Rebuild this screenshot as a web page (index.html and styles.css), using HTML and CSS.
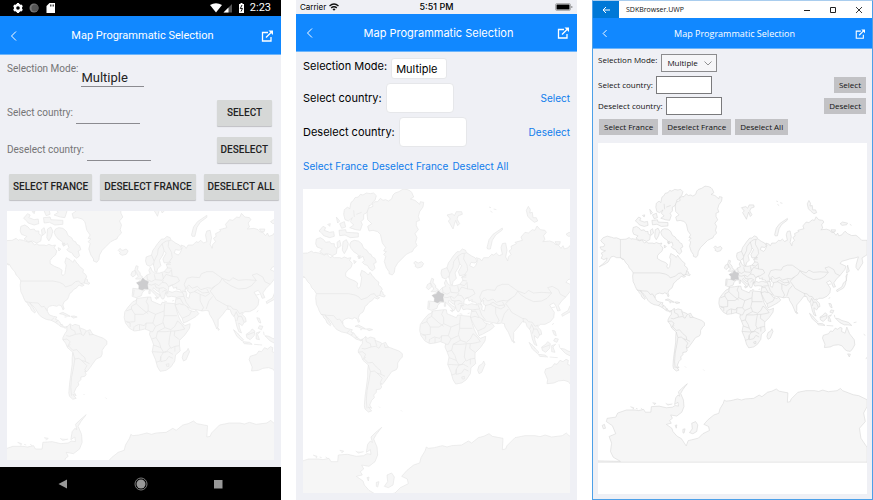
FILE: index.html
```html
<!DOCTYPE html>
<html lang="en">
<head>
<meta charset="utf-8">
<title>Map Programmatic Selection</title>
<link rel="stylesheet" href="styles.css">
</head>
<body>
<svg class="defs" aria-hidden="true">
  <defs>
    <g id="world">
      <g class="land">
        <!-- North America -->
        <path d="M18 219L4 213-6 214-14 211-30 207-45 213-53 223-47 231-39 237-42 245-56 246-51 256-36 260-51 268-47 277-52 287-42 292-30 286-33 295-47 309-59 318-38 308-27 301-16 282-6 280 4 285 18 285 26 292 30 291 38 304 46 312 50 322 58 330 64 340 62 352 64 372 70 384 72 390 78 402 84 405 86 412 92 418 96 428 106 436 108 432 98 416 90 405 98 412 108 424 118 440 126 448 140 455 155 458 165 463 176 470 182 476 192 479 198 482 204 476 196 478 186 472 180 462 176 458 168 455 172 448 162 446 150 442 144 432 143 422 150 416 160 413 172 416 178 412 186 415 190 426 194 424 190 412 194 402 204 395 208 386 210 378 216 374 222 366 232 360 238 352 248 356 254 352 244 348 262 344 258 332 262 328 258 320 250 314 252 306 240 296 236 290 232 286 225 276 220 284 212 276 200 270 196 284 200 292 198 306 196 318 190 324 186 318 188 308 180 302 165 296 152 288 152 278 160 268 168 262 172 250 164 240 168 232 158 234 148 230 140 234 134 232 118 232 112 228 105 232 95 220 88 224 72 218 60 216 56 218 50 212 38 218z"/>
        <path d="M258 332L264 336 264 342 271 346 268 350 254 346z"/>
        <path d="M168 184L178 180 190 182 200 190 206 204 216 210 222 220 228 222 232 230 240 234 244 246 236 250 240 264 232 272 222 264 218 256 208 252 202 246 208 240 204 228 194 234 188 222 176 214 168 204 164 194zM64 176L76 172 86 178 92 186 104 184 108 190 118 190 118 198 126 204 124 220 112 226 98 220 86 222 74 214 82 206 66 200 62 190zM126 186L134 180 138 196 128 204zM144 184L154 178 160 190 156 206 148 220 142 210zM72 152L84 138 92 142 88 150 104 156 116 154 118 168 104 172 86 166 80 158zM124 110L134 122 128 128zM98 132L106 130 104 138zM132 150L152 148 154 156 190 158 190 170 166 172 150 164 134 166zM134 130L148 124 152 140 140 144zM176 240L184 244 178 250zM188 228L196 226 192 236z"/>
        <path d="M164 86L168 66 174 62 180 52 190 50 196 42 204 44 214 38 226 40 236 38 244 46 240 60 234 64 228 74 222 76 222 86 214 98 206 102 206 116 198 124 202 132 196 150 182 148 164 142 176 134 166 124 172 112 160 122 150 118 146 102 148 88 158 80z"/>
        <path d="M216 98L220 84 234 78 232 70 240 64 248 64 256 54 264 60 272 58 280 62 290 56 294 44 300 38 312 34 324 26 338 28 346 32 350 36 356 50 346 56 360 60 374 72 376 64 386 66 384 80 374 94 370 108 374 120 364 124 364 136 370 148 360 160 366 172 362 186 366 196 356 206 352 214 346 216 334 222 320 236 308 248 300 262 298 276 292 284 282 280 282 274 274 262 268 244 272 228 266 222 274 214 266 212 272 202 262 188 258 170 256 162 248 154 234 150 222 152 218 138 230 130 218 118z"/>
        <path d="M356 248L362 242 364 246 370 248 380 244 386 250 380 260 368 263 360 258 362 254z"/>
        <path d="M180 438L190 434 202 440 212 446 200 445 190 440zM214 446L224 445 233 448 222 451zM195 448L201 448"/>
        <!-- South America -->
        <path d="M202 478L212 468 218 474 226 470 240 474 240 480 256 486 262 490 272 486 276 494 280 500 296 506 312 512 322 520 322 530 316 536 308 548 308 560 304 568 290 574 280 588 270 602 262 612 256 610 260 620 256 626 244 628 244 636 236 644 238 652 230 660 224 674 230 684 220 680 230 692 220 695 210 686 208 676 210 650 214 620 218 590 218 570 220 554 204 540 198 526 190 516 190 510 196 498 202 490zM252 679L255 682M318 690L321 693"/>
        <!-- Europe and Asia -->
        <path d="M400 362L418 364 418 352 412 346 422 338 434 330 442 322 452 318 448 308 453 298 458 310 466 316 480 316 494 312 504 300 500 290 514 284 506 284 494 286 490 274 500 256 494 250 490 262 480 278 484 294 474 304 472 314 466 312 464 298 460 288 452 296 442 292 438 280 440 268 456 262 460 248 466 240 474 228 486 214 494 214 502 206 512 210 514 216 528 226 540 232 546 242 540 248 528 246 524 256 536 262 542 256 548 240 544 232 556 236 560 242 566 232 580 232 590 222 596 224 604 218 612 226 622 222 618 202 622 190 632 188 636 210 632 230 638 242 640 230 648 222 642 212 650 206 648 198 664 190 660 186 682 180 678 170 690 156 700 158 712 148 720 150 726 137 736 148 750 150 754 156 746 166 750 178 743 184 764 182 776 186 780 192 790 194 798 204 804 196 808 206 820 202 824 196 831 189 840 198 855 205 870 204 879 210 891 222 911 222 911 274 892 286 895 304 878 331 870 320 871 310 879 282 866 286 849 289 834 294 819 298 813 306 834 316 830 328 825 334 812 350 800 362 790 376 796 390 788 392 782 376 776 368 764 374 770 384 778 396 776 412 766 424 750 432 736 432 728 440 738 450 740 462 734 464 728 474 718 466 720 480 726 496 718 492 712 476 706 450 696 438 692 426 682 424 670 440 656 456 656 476 652 484 640 456 630 440 628 430 620 428 608 430 590 426 574 424 562 416 570 428 584 432 590 428 598 438 590 446 580 452 562 462 552 466 548 452 540 440 532 424 526 412 530 388 516 386 504 388 498 376 506 376 498 374 496 386 492 394 488 394 484 388 480 374 470 368 462 360 460 366 472 376 482 382 476 392 466 380 458 372 452 366 436 366 428 376 426 384 410 390 398 386z"/>
        <path d="M410 294L416 296 414 306 422 316 422 322 430 328 422 334 408 334 416 326 412 318 406 306zM398 312L406 308 410 320 400 328 394 322zM448 370L452 366 452 378 448 378zM466 390L474 390 472 395zM494 400L502 402M518 400L524 398M800 402L819 391 825 376 836 368 834 352 839 343 832 382 825 395 812 402 802 408zM836 340L840 312 846 334z"/>
        <path d="M576 202L582 178 594 162 622 143 622 149 602 164 592 180 586 206 578 206zM456 104L472 100 478 106 484 94 500 94 502 102 490 106 486 116 494 130 488 136 482 120 478 132 474 146 466 132 460 122 466 116zM582 80L588 82M586 92L592 96M596 86L604 88M694 90L700 78 706 88 704 98 712 96 714 112 724 112 728 122 718 126 708 118 698 108zM780 184L796 184 794 192 784 192zM813 162L822 156 840 160 836 166 820 168zM848 164L854 168"/>
        <!-- Africa -->
        <path d="M400 402L410 398 412 392 430 390 446 388 454 388 456 400 470 406 484 412 488 404 504 406 526 408 532 430 538 448 546 464 556 474 572 468 570 482 556 502 540 518 540 534 542 550 528 562 526 580 514 598 500 608 482 611 474 598 468 576 458 552 462 530 456 514 450 500 452 490 436 484 420 488 404 490 390 482 378 466 374 450 376 432 386 418zM552 556L562 550 566 542 570 552 560 576 552 580 548 570z"/>
        <!-- Southeast Asia and Oceania -->
        <path d="M702 486L714 496 722 506 732 516 728 520 712 506zM730 522L750 524 758 530 734 528zM740 500L752 492 758 484 766 490 764 504 752 516 742 510zM770 496L782 492 774 500 780 516 770 514zM796 504L808 506 819 512 843 519 855 530 840 528 828 528 812 520zM772 450L780 452 784 466 778 464zM780 474L790 476 786 486 776 482zM764 530L788 532M792 492L794 502M772 434L776 428M655 480L660 486 656 488zM862 520L872 518M898 562L904 566M906 652L911 644"/>
        <path d="M749 576L752 566 771 560 778 550 786 552 795 540 804 544 813 537 820 540 818 552 831 558 837 536 847 560 864 582 866 600 856 618 849 624 838 622 831 618 820 604 807 600 790 602 777 608 756 610 758 598zM840 633L850 634 846 644z"/>
        <!-- Antarctica -->
        <path d="M-64 1020L18 1022-8 1007-18 986-14 956-23 932 1 922-11 893-33 878-30 866 1 862 8 847 40 836 70 836 84 838 102 834 108 844 128 844 130 824 158 822 184 828 206 826 216 820 228 822 226 808 214 816 218 792 226 782 232 786 228 770 240 758 260 741 244 762 236 776 246 800 248 824 240 844 222 858 200 854 206 866 196 874 202 884 184 888 204 902 208 914 222 930 239 940 256 966 263 947 300 938 316 922 340 910 337 896 320 888 336 870 356 854 374 848 378 832 390 812 394 800 400 804 418 802 442 796 456 800 470 796 500 794 520 782 530 788 550 772 566 768 582 760 592 768 624 774 622 808 632 806 636 796 660 772 690 766 720 766 735 769 750 764 770 770 802 766 814 758 822 766 861 781 880 784 911 799 911 823 898 847 904 878 883 902 888 938 911 972 911 1025-64 1025zM-48 892L-40 888-36 902-44 904z"/>
        <path d="M54 824L66 828 64 834M74 830L80 832M92 830L98 834M134 810L146 812 140 818M182 812L190 818 206 814"/>
        <path class="water" d="M506 370L508 358 518 352 522 362 532 358 530 364 542 366 546 374 530 370 518 374zM556 366L566 360 564 370 572 376 568 392 560 388 562 378z"/>
        <!-- Islands of the Weddell Sea -->
        <path d="M276 884L290 878 298 890 294 914 280 922 268 918 278 904zM244 906L252 904 248 920 244 918zM216 892L222 890 220 902z"/>
      </g>
      <g class="borders">
        <path d="M18 219V285L30 291M64 340H160L180 344 192 350 198 358 216 352 228 342 238 340 244 348M78 402L98 405 116 406 126 418 134 416 143 430M155 458L164 450M168 464L176 458M182 472L190 470M176 90L178 110M184 102L200 96"/>
        <path d="M212 470L214 484 226 490 228 500 210 506 200 504M228 500L242 498 252 504 260 490M240 480L246 498M268 492L270 502 282 500M190 516L202 514 212 522 206 534 220 548 232 546 244 560 256 570 258 582 270 588M220 554L226 574 238 572 246 578 258 582M226 574L222 600 216 630 214 660 216 684M246 578L262 594 256 606 260 612M204 538L212 530"/>
        <path d="M456 262L464 280 462 292M464 280L474 260 476 244 488 228 500 220 514 218M488 228L494 250M508 220L506 236 516 254 518 270 508 284M500 290L514 290M502 300L516 302M494 312L508 316 516 306 518 326 500 320 488 338 468 336 464 320M488 316L492 334M518 326L534 328 540 340 524 350 510 354M442 322L444 336 456 342 466 336M444 336L438 346M446 350L456 352 468 348 478 354 488 344 492 338M466 350L470 360 480 362 478 372M488 344L500 346 508 358M480 362L492 360 502 366M488 374L494 368 506 372M548 372L554 386 536 388 530 390M548 370L560 372M404 366L402 384M424 366L436 368"/>
        <path d="M560 366L554 350 562 332 578 328 600 330 606 318 622 312 640 312 654 322 668 332 660 346 648 354 636 362 624 360 604 366 594 356 578 362 568 352 560 360M668 332L690 340 700 330 716 338 740 336 770 338 756 354 740 362 716 364 694 354 676 342 668 332M770 338L758 322 772 318 790 328 796 342 812 350M648 354L632 370 644 386 650 396 664 404 682 414 694 416 700 424 712 426 720 438 730 434M570 376L586 372 602 380 618 386 630 378 622 364M602 380L602 400 612 420 606 430M640 386L628 400 620 424M554 388L560 404 572 420M542 392L552 410 562 416M530 394L542 392M526 412L540 408 552 412M548 452L570 442 576 430M704 446L710 432 716 446 712 460M716 446L726 446 734 464M684 414L686 426M584 372L594 366 610 376 628 374M770 382L780 380M742 502L764 494"/>
        <path d="M412 392L410 408 396 416 396 424 406 440 432 440 446 430 446 412 440 402 446 388M396 424L380 430M406 440L406 462 382 464M446 430L468 440 494 430 496 408M468 440L460 466 440 466 434 474 418 470 406 476M410 408L430 426 446 438M494 430V444L532 444M494 444L490 462 496 480 514 486 526 476 534 460M440 466L438 484M460 466L468 476 460 492 452 492M468 476L490 466M420 472L420 488M404 476L402 488M378 460L392 466 392 478M496 480L474 492 470 510 456 514M474 492H500L514 490 510 510 508 530 514 542 526 536 540 534M514 490L526 490 540 488 556 484M526 490L524 504 540 516M534 460L546 470 556 484M470 510L480 526 484 540 462 532M458 552L490 554 500 552 512 540M484 540L492 554 484 566 482 580 470 584M492 554L506 552 520 560M484 566V582L500 578 508 566 520 572M500 590L508 588 508 596 502 596zM526 536L526 552"/>
      </g>
      <path class="france" d="M411 345L424 341 430 331 437 338 447 342 444 351 446 364 435 363 428 367 418 364 419 354z"/>
    </g>
    <g id="open-icon" fill="none" stroke="currentColor" stroke-width="1.3">
      <path d="M7 2.5H1.5V11H10V7M5 7.500L10.500 2"/>
      <path d="M7.500 .5H12V5z" fill="currentColor" stroke="none"/>
    </g>
  </defs>
</svg>

<main class="gallery">
  <section class="device android">
    <div class="status">
      <svg viewBox="0 0 44 12" width="44" height="12" aria-hidden="true">
        <circle cx="6" cy="6" r="3" fill="none" stroke="#fff" stroke-width="2.400"/>
        <path d="M6 1V3M6 9V11M1.700 3.500L3.400 4.500M8.600 7.500L10.300 8.500M10.300 3.500L8.600 4.500M3.400 7.500L1.700 8.500" stroke="#fff" stroke-width="2.200"/>
        <circle cx="22" cy="6" r="4.500" fill="#777"/><circle cx="23" cy="6" r="3.500" fill="#555"/>
        <path d="M37.500 1H43V11H34.500V4z" fill="#fff"/><path d="M38.500 2.500V4.500M40 2.500V4.500M41.500 2.500V4.500" stroke="#000" stroke-width=".7"/>
      </svg>
      <span class="spacer"></span>
      <svg viewBox="0 0 35 12" width="35" height="12" aria-hidden="true">
        <path d="M0 3Q6 -.5 12 3L6 10.500z" fill="#fff"/>
        <path d="M22 2V10.500H13.500z" fill="#555"/><path d="M18.500 5.500V10.500H13.500z" fill="#fff"/>
        <path d="M29 2H30.500V1H32.500V2H34V11H29z" fill="#fff"/><path d="M32 3L30.300 6.500H32.500L31 9.500" fill="none" stroke="#000" stroke-width=".9"/>
      </svg>
      <span class="clock">2:23</span>
    </div>
    <header class="bar">
      <button class="icon" aria-label="Back"><svg viewBox="0 0 8 12" width="8" height="12"><path d="M6 1.500L1.500 6 6 10.500" fill="none" stroke="currentColor"/></svg></button>
      <h1>Map Programmatic Selection</h1>
      <button class="icon" aria-label="Open"><svg viewBox="0 0 12 12" width="12" height="12"><use href="#open-icon"/></svg></button>
    </header>
    <form class="form">
      <div class="row first"><label for="a-mode">Selection Mode:</label><select id="a-mode"><option>Multiple</option></select></div>
      <div class="row"><label for="a-sel">Select country:</label><input id="a-sel" type="text"><button type="button">SELECT</button></div>
      <div class="row"><label for="a-des">Deselect country:</label><input id="a-des" type="text"><button type="button">DESELECT</button></div>
      <div class="row actions"><button type="button">SELECT FRANCE</button><button type="button">DESELECT FRANCE</button><button type="button">DESELECT ALL</button></div>
    </form>
    <div class="map"><svg viewBox="22 130 802 747" preserveAspectRatio="xMidYMid slice" role="img" aria-label="World map"><use href="#world"/></svg></div>
    <nav class="softkeys">
      <button aria-label="Back"><svg viewBox="0 0 12 12" width="12" height="12"><path d="M10 1.500V10.500L1.500 6z" fill="#999"/></svg></button>
      <button aria-label="Home"><svg viewBox="0 0 14 14" width="14" height="14"><circle cx="7" cy="7" r="6" fill="none" stroke="#999" stroke-width=".8"/><circle cx="7" cy="7" r="4.500" fill="#999"/></svg></button>
      <button aria-label="Recent"><svg viewBox="0 0 12 12" width="12" height="12"><path d="M2 2H10.500V10.500H2z" fill="#999"/></svg></button>
    </nav>
  </section>

  <section class="device ios">
    <div class="status">
      <span class="carrier">Carrier
        <svg viewBox="0 0 10 8" width="10" height="8" aria-hidden="true"><path d="M.5 3Q5 -.8 9.500 3M2.200 4.900Q5 2.600 7.800 4.900" fill="none" stroke="#111" stroke-width="1.400"/><path d="M3.500 6.200Q5 5 6.500 6.200L5 7.800z" fill="#111"/></svg>
      </span>
      <span class="clock">5:51 PM</span>
      <svg class="battery" viewBox="0 0 18 8" width="18" height="8" aria-hidden="true"><rect x=".5" y=".5" width="15" height="7" rx="1.500" fill="none" stroke="#888" stroke-width=".6"/><rect x="1.500" y="1.500" width="13" height="5" rx=".5" fill="#000"/><path d="M16.800 3V5" stroke="#888"/></svg>
    </div>
    <header class="bar">
      <button class="icon" aria-label="Back"><svg viewBox="0 0 8 12" width="8" height="12"><path d="M6 1.500L1.500 6 6 10.500" fill="none" stroke="currentColor"/></svg></button>
      <h1>Map Programmatic Selection</h1>
      <button class="icon" aria-label="Open"><svg viewBox="0 0 12 12" width="12" height="12"><use href="#open-icon"/></svg></button>
    </header>
    <form class="form">
      <div class="row first"><label for="i-mode">Selection Mode:</label><select id="i-mode"><option>Multiple</option></select></div>
      <div class="row"><label for="i-sel">Select country:</label><input id="i-sel" type="text"><button type="button">Select</button></div>
      <div class="row"><label for="i-des">Deselect country:</label><input id="i-des" type="text"><button type="button">Deselect</button></div>
      <div class="row actions"><button type="button">Select France</button><button type="button">Deselect France</button><button type="button">Deselect All</button></div>
    </form>
    <div class="map"><svg viewBox="23 26 803 912" preserveAspectRatio="xMidYMid slice" role="img" aria-label="World map"><use href="#world"/></svg></div>
  </section>

  <section class="device uwp">
    <div class="titlebar">
      <button class="back" aria-label="Back"><svg viewBox="0 0 8 8" width="8" height="8"><path d="M8 4H1M4 1L1 4 4 7" fill="none" stroke="#fff"/></svg></button>
      <span class="app">SDKBrowser.UWP</span>
      <span class="spacer"></span>
      <button class="win" aria-label="Minimize"><svg viewBox="0 0 8 8" width="8" height="8"><path d="M1 4.500H7" stroke="#222"/></svg></button>
      <button class="win" aria-label="Maximize"><svg viewBox="0 0 8 8" width="8" height="8"><path d="M1.500 1.500H6.500V6.500H1.500z" fill="none" stroke="#222"/></svg></button>
      <button class="win" aria-label="Close"><svg viewBox="0 0 8 8" width="8" height="8"><path d="M1 1L7 7M7 1L1 7" stroke="#222" stroke-width=".9"/></svg></button>
    </div>
    <header class="bar">
      <button class="icon" aria-label="Back"><svg viewBox="0 0 8 12" width="6" height="9"><path d="M6 1.500L1.500 6 6 10.500" fill="none" stroke="currentColor" stroke-width="1.300"/></svg></button>
      <h1>Map Programmatic Selection</h1>
      <button class="icon" aria-label="Open"><svg viewBox="0 0 12 12" width="10" height="10"><use href="#open-icon"/></svg></button>
    </header>
    <form class="form">
      <div class="row first"><label for="u-mode">Selection Mode:</label>
        <span class="picker"><select id="u-mode"><option>Multiple</option></select><svg viewBox="0 0 8 5" width="8" height="5" aria-hidden="true"><path d="M.5 .5L4 4 7.500 .5" fill="none" stroke="#777" stroke-width=".8"/></svg></span></div>
      <div class="row"><label for="u-sel">Select country:</label><input id="u-sel" type="text"><button type="button">Select</button></div>
      <div class="row"><label for="u-des">Deselect country:</label><input id="u-des" type="text"><button type="button">Deselect</button></div>
      <div class="row actions"><button type="button">Select France</button><button type="button">Deselect France</button><button type="button">Deselect All</button></div>
    </form>
    <div class="map"><svg viewBox="-64 -130 975 1270" preserveAspectRatio="xMidYMid slice" role="img" aria-label="World map"><use href="#world"/></svg></div>
  </section>
</main>
</body>
</html>
```
FILE: styles.css
```css
* { box-sizing: border-box; }
body { margin: 0; background: #fff; }
button, input, select { font: inherit; color: inherit; margin: 0; padding: 0; border: 0; border-radius: 0; background: none; appearance: none; }
svg { display: block; flex: none; }
.defs { position: absolute; width: 0; height: 0; }

.gallery { display: grid; grid-template-columns: repeat(3, minmax(0, 1fr)); gap: 15px; min-height: 100vh; }
.device { --coast: #e6e6e6; display: flex; flex-direction: column; background: #eff0f5; overflow: hidden; }
.spacer { flex: 1; }
.status { display: flex; align-items: center; flex: none; }

.bar { display: flex; align-items: center; flex: none; background: #1188ff; color: #fff; border-bottom: 1px solid #6cb5fb; padding: 0 8px; }
.bar h1 { flex: 1; margin: 0; padding-left: 4px; text-align: center; font-weight: 400; white-space: nowrap; }
.bar .icon { display: flex; justify-content: center; width: 12px; }

.form { flex: none; padding: 0 7px; margin-bottom: 6px; }
.row { display: flex; align-items: center; white-space: nowrap; }
.row.first { align-items: flex-start; }
.row input + button { margin-left: auto; }
.row button { flex: none; }

.map { flex: 1; min-height: 120px; display: flex; margin: 0 7px 7px; background: #fff; }
.map svg { flex: 1; width: 100%; height: 100%; min-width: 0; }
.land { fill: #f6f6f6; stroke: var(--coast); stroke-width: 2; stroke-linejoin: round; }
.land .water { fill: #fff; }
.borders { fill: none; stroke: var(--coast); stroke-width: 2; stroke-linejoin: round; }
.france { fill: #cdcdcf; stroke: #c4c4c6; stroke-width: 1; }

/* Android */
.android { font: 10px/14px Roboto, sans-serif; color: #757575; }
.android .status { height: 16px; padding: 0 10px 0 12px; background: #000; color: #fff; }
.android .clock { margin-left: 5px; font-size: 11px; }
.android .bar { height: 39px; padding-top: 2px; }
.android .bar h1 { font-size: 11px; }
.android .form { padding-right: 9px; margin-bottom: 6px; }
.android .row { height: 37px; }
.android .row.first { height: 39px; padding-top: 7px; }
.android select { width: 63px; height: 24px; margin: 1px 0 0 3px; padding-top: 6px; font-size: 13px; color: #222; border-bottom: 1px solid #8b8b90; }
.android input { width: 64px; height: 22px; margin-left: 3px; border-bottom: 1px solid #8b8b90; }
.android .row button { height: 26px; padding: 0 4px; min-width: 55px; border-radius: 1px; background: #d6d8d7; color: #222; font-weight: 500; box-shadow: 0 1px 1px #0003; }
.android .actions { gap: 8px; padding-left: 2px; }
.softkeys { display: flex; flex: none; align-items: center; justify-content: space-between; height: 33px; padding: 0 57px; background: #000; }

/* iOS */
.ios { font: 11px/16px Inter, sans-serif; color: #000; }
.ios .status { display: grid; grid-template-columns: 1fr auto 1fr; height: 14px; padding: 0 4px; font-size: 8px; line-height: 12px; }
.carrier { display: flex; align-items: center; gap: 3px; }
.ios .clock { font-weight: 500; font-size: 9px; }
.battery { justify-self: end; }
.ios .bar { height: 38px; }
.ios .bar h1 { font-size: 11px; }
.ios .row { height: 34px; }
.ios .row.first { height: 29px; padding-top: 6px; }
.ios select { width: 56px; height: 21px; margin: 0 0 0 4px; padding: 0 4px; border: 1px solid #e6e7ea; border-radius: 3px; background: #fff; }
.ios input { width: 68px; height: 30px; margin-left: 4px; border: 1px solid #e6e7ea; border-radius: 4px; background: #fff; }
.ios .row button { color: #0f7dec; font-size: 10px; }
.ios .actions { gap: 4px; }

/* UWP */
.uwp { --coast: #d5d5d5; font: 8px/12px "Open Sans", sans-serif; color: #111; border: 1px solid #4da0e8; border-top-color: #a9cdee; }
.titlebar { display: flex; flex: none; align-items: center; height: 17px; background: #fff; font-size: 7px; }
.titlebar button { display: flex; align-items: center; justify-content: center; width: 26px; align-self: stretch; }
.titlebar .back { background: #0078d7; }
.app { margin-left: 7px; }
.uwp .bar { height: 31px; padding: 1px 6px 0; }
.uwp .bar h1 { font-size: 9px; }
.uwp .form { padding: 0 6px 0 5px; margin-bottom: 5px; }
.uwp .row { height: 21px; }
.uwp .row.first { height: 25px; padding-top: 5px; }
.picker { display: flex; align-items: center; height: 18px; width: 56px; margin-left: 4px; padding: 0 4px 0 5px; border: 1px solid #8c8c8e; background: #f6f6f8; }
.picker select { flex: 1; min-width: 0; }
.uwp input { width: 56px; height: 18px; margin-left: 3px; border: 1px solid #7a7a7c; background: #fff; }
.uwp .row button { height: 16px; padding: 0 5px; background: #c2c2c5; }
.uwp .actions { height: 22px; gap: 4px; padding-left: 1px; }
.uwp .map { margin: 0 5px 5px; }
```
